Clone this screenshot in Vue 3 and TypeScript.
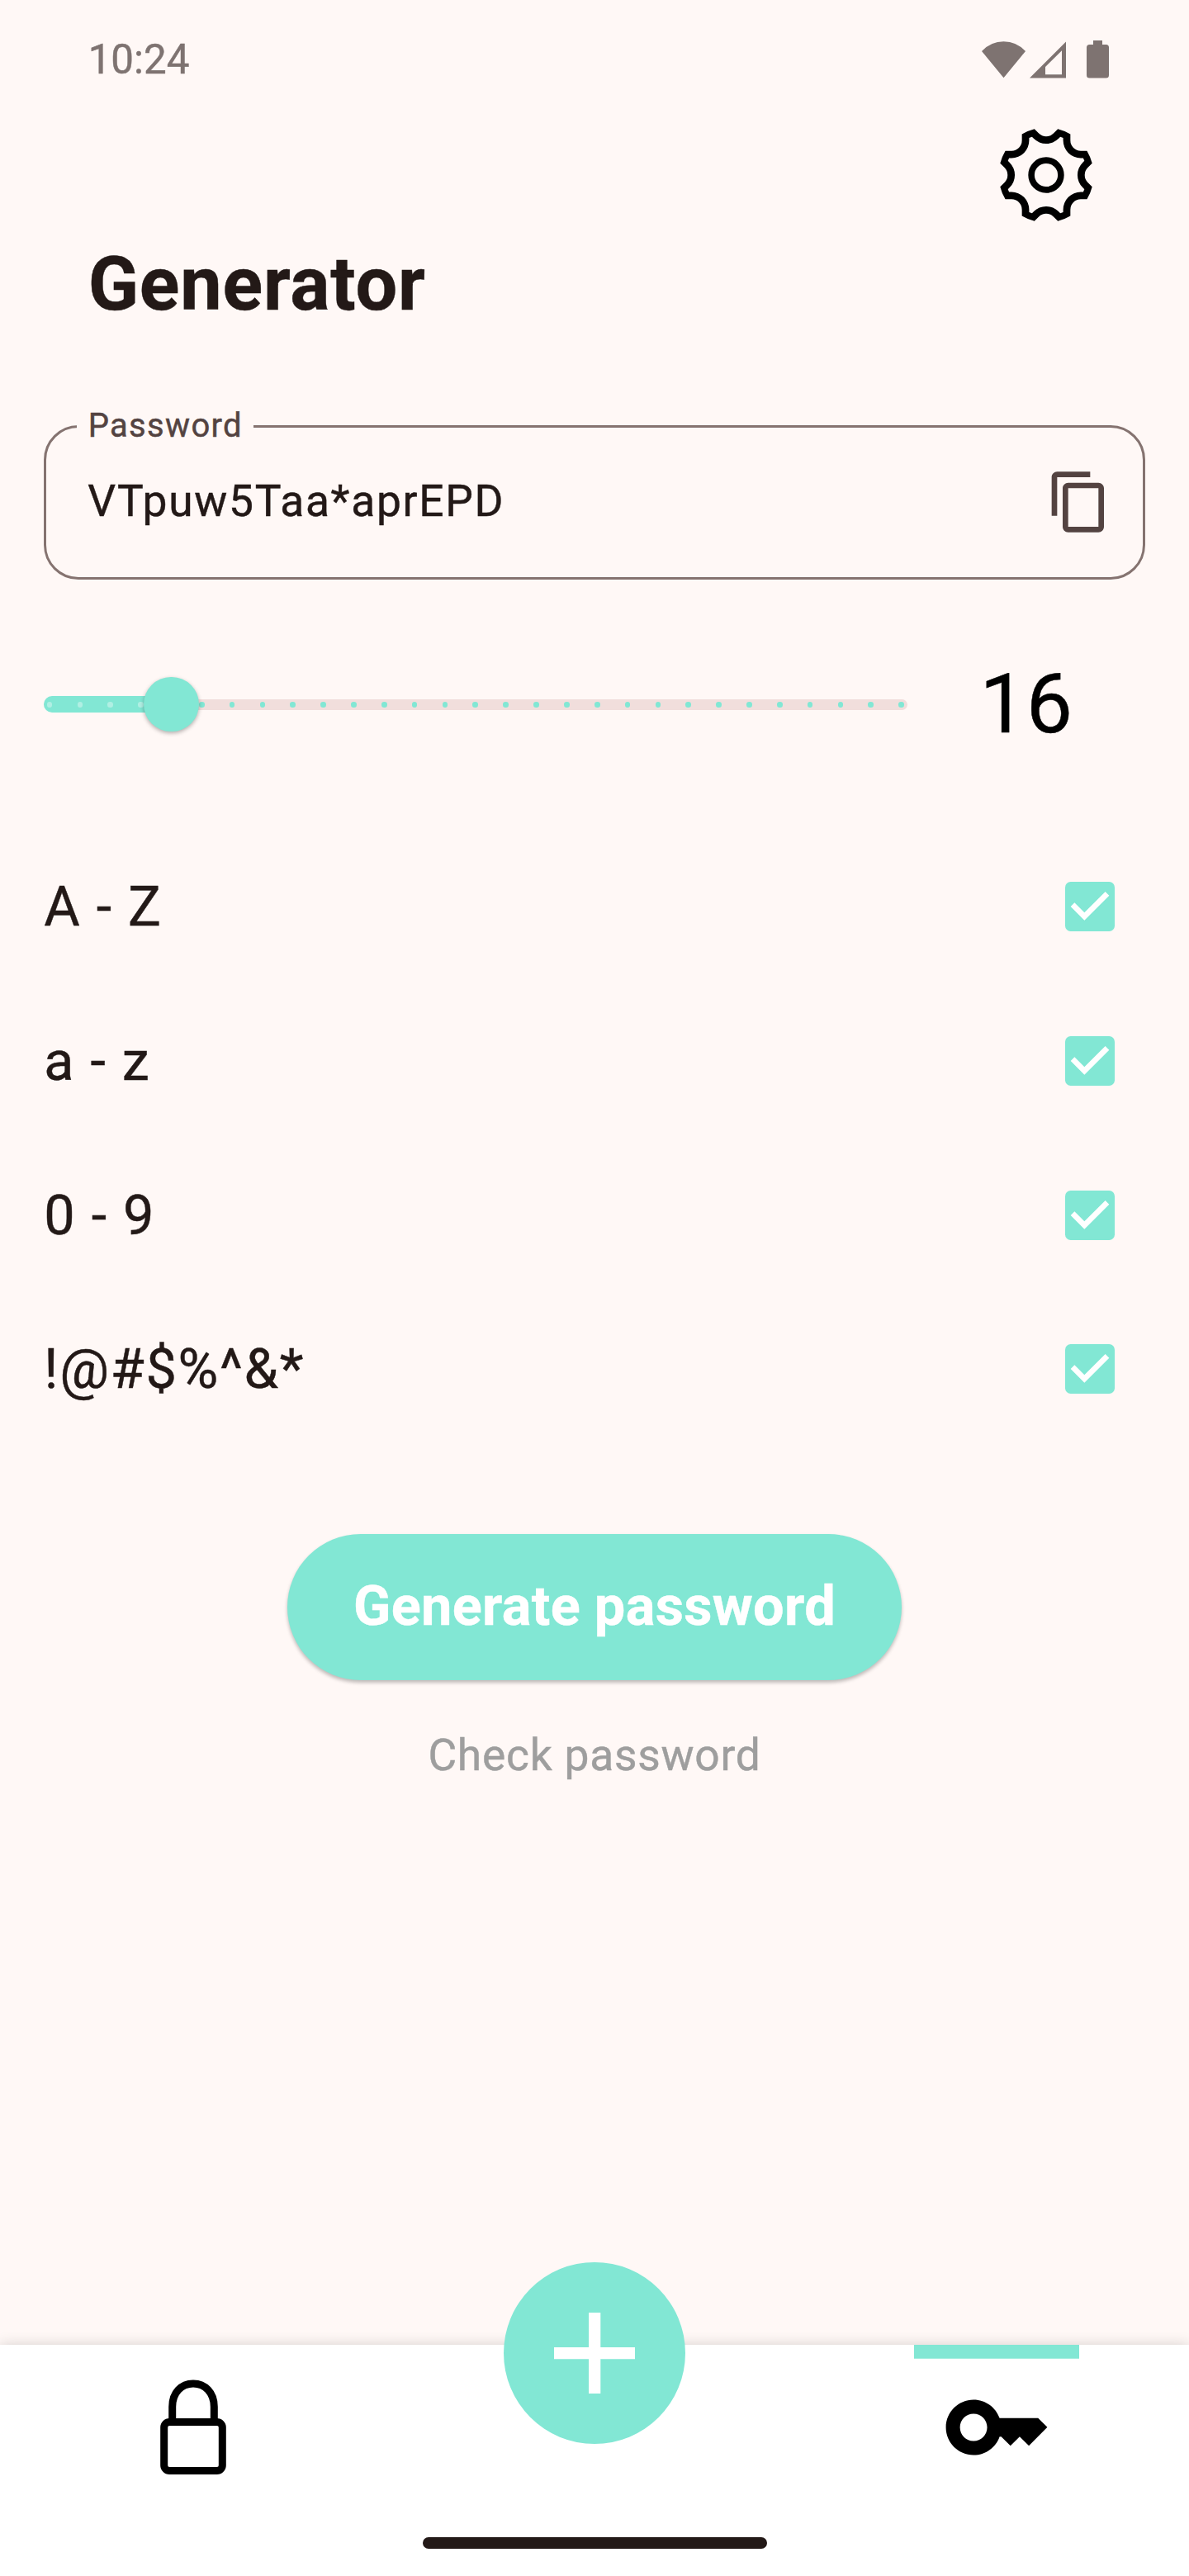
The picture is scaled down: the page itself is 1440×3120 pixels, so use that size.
<script setup lang="ts">
import { ref } from 'vue'

interface CharSet {
  label: string
  enabled: boolean
}

const password = ref<string>('VTpuw5Taa*aprEPD')
const minLength = 12
const maxLength = 40
const length = ref<number>(16)

const sets = ref<CharSet[]>([
  { label: 'A - Z', enabled: true },
  { label: 'a - z', enabled: true },
  { label: '0 - 9', enabled: true },
  { label: '!@#$%^&*', enabled: true },
])

const stepCount = maxLength - minLength
const ticks = Array.from({ length: stepCount + 1 }, (_, i) => i)

// Rotates a point of the gear outline and formats it for a path.
function at(x: number, y: number, turn: number): string {
  const a = (turn * Math.PI) / 4
  const rx = x * Math.cos(a) - y * Math.sin(a)
  const ry = x * Math.sin(a) + y * Math.cos(a)
  return `${rx.toFixed(2)} ${ry.toFixed(2)}`
}

// Eight notches round the wheel: an outer contour and a parallel inner one.
function gearPath(): string {
  let outer = ''
  let inner = ''
  for (let k = 0; k < 8; k++) {
    outer += k === 0 ? `M${at(-14.2, -55.7, k)}` : `A57.5 57.5 0 0 1 ${at(-14.2, -55.7, k)}`
    outer += `L${at(-8.9, -50.4, k)}A12.56 12.56 0 0 0 ${at(8.9, -50.4, k)}L${at(14.2, -55.7, k)}`
    inner += `${k === 0 ? 'M' : 'L'}${at(-17.2, -46.3, k)}`
    inner += `L${at(-15.06, -44.2, k)}A21.3 21.3 0 0 0 ${at(15.06, -44.2, k)}L${at(17.2, -46.3, k)}`
  }
  outer += `A57.5 57.5 0 0 1 ${at(-14.2, -55.7, 0)}Z`
  return `${outer}${inner}Z`
}

const gear = gearPath()
</script>

<template>
  <div class="screen">
    <header class="status">
      <span class="clock">10:24</span>
      <svg class="status-icons" width="156" height="48" viewBox="0 0 156 48">
        <path d="M2 14 Q13 2.3 28.5 2.3 Q44 2.3 55 14 L28.5 46.3 Z" />
        <path fill-rule="evenodd" d="M60 46.4 L104 2.5 V46.4 Z M79 42.3 H99 V13.3 L79 33 Z" />
        <path d="M137 1h11v5h4.500a3.500 3.500 0 0 1 3.500 3.500v33.400a3.500 3.500 0 0 1 -3.500 3.500h-20a3.500 3.500 0 0 1 -3.500 -3.500v-33.400a3.500 3.500 0 0 1 3.500 -3.500h4.500z" />
      </svg>
    </header>

    <div class="toolbar">
      <button class="icon-button" aria-label="Settings">
        <svg width="116" height="116" viewBox="-58 -58 116 116">
          <path :d="gear" fill-rule="evenodd" />
          <circle r="17.9" fill="none" stroke="#000" stroke-width="7.600" />
        </svg>
      </button>
    </div>

    <h1 class="title">Generator</h1>

    <main class="content">
      <div class="field">
        <label class="field-label">Password</label>
        <span class="field-value">{{ password }}</span>
        <svg class="copy" width="80" height="80" viewBox="0 0 24 24">
          <path d="M16 1H4c-1.100 0-2 .9-2 2v14h2V3h12V1zm3 4H8c-1.100 0-2 .9-2 2v14c0 1.100.9 2 2 2h11c1.100 0 2-.9 2-2V7c0-1.100-.9-2-2-2zm0 16H8V7h11v14z" />
        </svg>
      </div>

      <div class="length-row">
        <div class="slider">
          <div class="track"></div>
          <div class="track-active" :style="{ width: ((length - minLength) / stepCount) * 1032 + 6.67 + 'px' }"></div>
          <div class="ticks">
            <i v-for="t in ticks" :key="t" class="tick" :class="{ passed: t <= length - minLength }"></i>
          </div>
          <div class="thumb" :style="{ left: 6.67 + ((length - minLength) / stepCount) * 1032 + 'px' }"></div>
        </div>
        <span class="length-value">{{ length }}</span>
      </div>

      <ul class="sets">
        <li v-for="s in sets" :key="s.label" class="set">
          <span>{{ s.label }}</span>
          <svg width="60" height="60" viewBox="3 3 18 18">
            <rect x="3" y="3" width="18" height="18" rx="2" fill="#82e7d4" />
            <path v-if="s.enabled" fill="#fff" d="M10 17l-5-5 1.410-1.410L10 14.170l7.590-7.590L19 8z" />
          </svg>
        </li>
      </ul>

      <div class="actions">
        <button class="generate">Generate password</button>
        <button class="check">Check password</button>
      </div>
    </main>

    <nav class="nav">
      <div class="nav-items">
        <a class="nav-item">
          <svg class="lock" width="80" height="116" viewBox="0 0 80 116" fill="none" stroke="#000" stroke-width="9">
            <path d="M14.700 50V33C14.700 16 25.500 5 40 5S65.300 16 65.300 33V50" />
            <rect x="4.700" y="51.500" width="70.600" height="59" rx="6.500" />
          </svg>
        </a>
        <a class="nav-item active">
          <svg class="key" width="134" height="134" viewBox="0 0 24 24">
            <path d="M21 10h-8.350C11.830 7.670 9.610 6 7 6c-3.310 0-6 2.690-6 6s2.690 6 6 6c2.610 0 4.830-1.670 5.650-4H13l2 2 2-2 2 2 4-4.040L21 10zM7 14.950c-1.630 0-2.950-1.320-2.950-2.950S5.370 9.050 7 9.050 9.950 10.370 9.950 12 8.630 14.950 7 14.950z" />
          </svg>
        </a>
      </div>
      <button class="fab" aria-label="Add">
        <svg width="98" height="98" viewBox="0 0 98 98">
          <path fill="#fff" d="M42 0h14.300v42H98v14.300H56.300V98H42V56.300H0V42h42z" />
        </svg>
      </button>
      <div class="home-bar"></div>
    </nav>
  </div>
</template>

<style>
body {
  margin: 0;
  background: #fff8f6;
}
</style>

<style scoped>
.screen {
  display: flex;
  flex-direction: column;
  width: 1440px;
  height: 3120px;
  overflow: hidden;
  background: #fff8f6;
  color: #231917;
  font-family: Roboto, sans-serif;
  -webkit-text-stroke: 0.450px currentColor;
}

button {
  padding: 0;
  border: 0;
  background: none;
  font-family: inherit;
}

svg {
  display: block;
  flex: none;
}

.status {
  display: flex;
  justify-content: space-between;
  align-items: center;
  height: 144px;
  padding: 0 97px 0 106.67px;
  color: #7e7371;
  fill: #7e7371;
}

.clock {
  font-size: 49.300px;
  line-height: 60px;
}

.toolbar {
  display: flex;
  justify-content: flex-end;
  height: 144px;
  padding-right: 115.300px;
}

.icon-button {
  width: 116px;
  height: 116px;
  margin-top: 9.700px;
}

.title {
  height: 110px;
  margin: 0;
  padding-left: 106.670px;
  font-size: 90px;
  line-height: 113px;
  font-weight: 700;
  letter-spacing: 0.830px;
}

.content {
  display: flex;
  flex-direction: column;
  padding: 117px 53.330px 0;
}

.field {
  position: relative;
  display: flex;
  justify-content: space-between;
  align-items: center;
  box-sizing: border-box;
  height: 186.670px;
  padding: 0 37px 0 50px;
  border: 3.330px solid #857370;
  border-radius: 42px;
}

.field-label {
  position: absolute;
  left: 37px;
  top: -26.500px;
  padding: 0 13.330px;
  background: #fff8f6;
  color: #534341;
  font-size: 40px;
  line-height: 48px;
  letter-spacing: 1.330px;
}

.field-value {
  padding-bottom: 3px;
  font-size: 53.330px;
  line-height: 80px;
  letter-spacing: 1.670px;
}

.copy {
  fill: #534341;
}

.length-row {
  display: flex;
  align-items: center;
  height: 160px;
  margin-top: 71.600px;
}

.slider {
  position: relative;
  display: flex;
  align-items: center;
  width: 1045.330px;
  height: 67px;
}

.track {
  flex: 1;
  height: 13.330px;
  border-radius: 7px;
  background: #f1dedc;
}

.track-active {
  position: absolute;
  left: 0;
  top: 23.500px;
  height: 20px;
  border-radius: 10px 0 0 10px;
  background: #82e7d4;
}

.ticks {
  position: absolute;
  inset: 0 3.330px;
  display: flex;
  justify-content: space-between;
  align-items: center;
}

.tick {
  width: 6.670px;
  height: 6.670px;
  border-radius: 50%;
  background: #82e7d4;
}

.tick.passed {
  background: #b0efe3;
}

.thumb {
  position: absolute;
  top: 0;
  width: 66.670px;
  height: 66.670px;
  margin-left: -33.330px;
  border-radius: 50%;
  background: #82e7d4;
  box-shadow: 0 2px 5px rgba(0, 0, 0, 0.3);
}

.length-value {
  width: 288px;
  color: #000;
  font-size: 100px;
  line-height: 120px;
  text-align: center;
}

.sets {
  margin: 71.800px 0 0;
  padding: 0;
  list-style: none;
}

.set {
  display: flex;
  justify-content: space-between;
  align-items: center;
  height: 186.670px;
  padding-right: 36.670px;
  font-size: 66.670px;
  letter-spacing: 1.670px;
}

.actions {
  display: flex;
  flex-direction: column;
  align-items: center;
}

.generate {
  width: 744px;
  height: 177px;
  margin-top: 106.700px;
  border-radius: 89px;
  background: #82e7d4;
  box-shadow: 0 3px 4px rgba(0, 0, 0, 0.25);
  color: #fff;
  font-size: 66.670px;
  line-height: 175px;
  padding-bottom: 2px;
  font-weight: 700;
  letter-spacing: 0.330px;
}

.check {
  margin-top: 51px;
  color: #9e9e9e;
  font-size: 53.330px;
  line-height: 80px;
  letter-spacing: 0.750px;
}

.nav {
  position: relative;
  display: flex;
  flex-direction: column;
  justify-content: space-between;
  align-items: center;
  height: 280px;
  margin-top: auto;
  background: #fff;
  box-shadow: 0 0 16px rgba(0, 0, 0, 0.16);
}

.nav-items {
  display: flex;
  justify-content: space-between;
  width: 100%;
}

.nav-item {
  width: 200px;
  height: 200px;
  margin: 0 133.500px;
}

.nav-item.active {
  box-shadow: inset 0 16.670px #82e7d4;
}

.lock {
  margin: 42px 0 0 60px;
}

.key {
  margin: 33px 0 0 33px;
}

.fab {
  position: absolute;
  left: 610px;
  top: -100px;
  display: flex;
  justify-content: center;
  align-items: center;
  width: 220px;
  height: 220px;
  border-radius: 50%;
  background: #82e7d4;
}

.home-bar {
  width: 417px;
  height: 13.330px;
  margin-bottom: 33.330px;
  border-radius: 7px;
  background: #231917;
}
</style>
